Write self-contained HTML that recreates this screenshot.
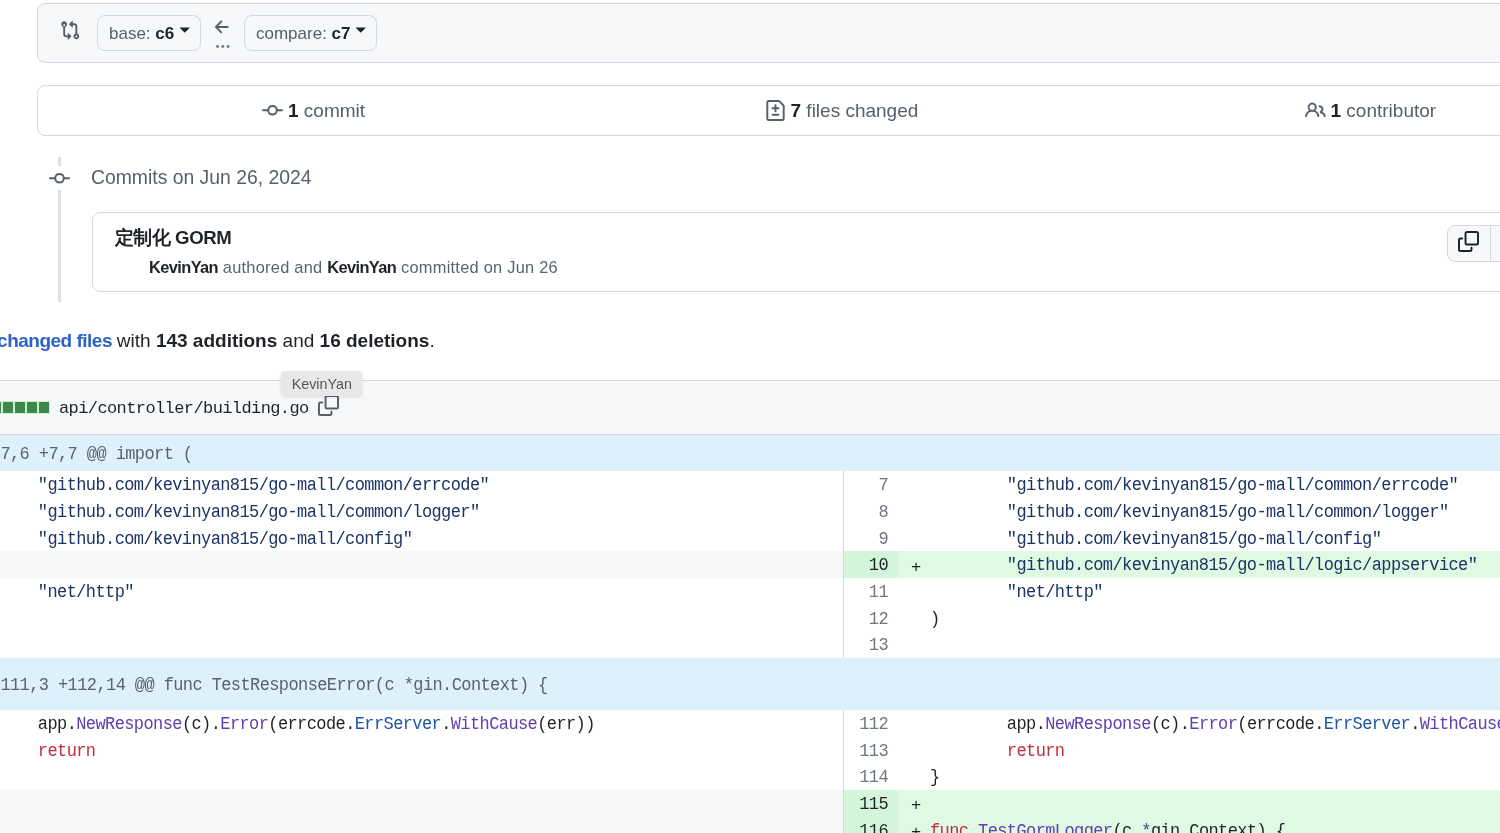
<!DOCTYPE html>
<html><head><meta charset="utf-8">
<style>
*{box-sizing:border-box;margin:0;padding:0}
html{background:#fff}
html,body{width:1500px;height:833px;overflow:hidden}
body{will-change:transform}
body{position:relative;font-family:"Liberation Sans",sans-serif;color:#1f2328}
.abs{position:absolute}
.mono{font-family:"Liberation Mono",monospace}
.box{position:absolute;border:1px solid #d5d8dc;border-radius:8px}
.btn{position:absolute;top:15px;height:36px;border:1px solid #d5d8dc;border-radius:8px;background:#f6f8fa;font-size:17px;color:#57606a;line-height:35.4px;padding-left:11px;white-space:nowrap}
.btn b{color:#1f2328}
.caret{position:absolute;top:9px}
.sumitem{position:absolute;top:0;height:49px;line-height:49px;font-size:19px;color:#57606a;white-space:nowrap}
.sumitem b{color:#1f2328}
.sumitem svg{position:absolute;top:13.7px}
.row{position:absolute;left:0;width:1500px;height:26.67px;line-height:26.67px;font-size:16px;white-space:pre}
.code{position:absolute;font-family:"Liberation Mono",monospace;font-size:17px;letter-spacing:-0.6px;white-space:pre;color:#1f2328}
.sy{transform:scaleY(1.06);transform-origin:0 17.9px}
.s{color:#1c3464}
.f{color:#6040b0}
.k{color:#bc313c}
.c{color:#1d56a6}
</style></head>
<body>

<!-- range editor -->
<div class="box" style="left:37px;top:3px;width:1500px;height:60px;background:#f6f8fa"></div>
<svg class="abs" style="left:59.9px;top:20.2px" width="20.5" height="20.5" viewBox="0 0 16 16" fill="#57606a"><path d="M9.573.677A.25.25 0 0 1 10 .854V2.5h1A2.5 2.5 0 0 1 13.5 5v5.628a2.251 2.251 0 1 1-1.5 0V5a1 1 0 0 0-1-1h-1v1.646a.25.25 0 0 1-.427.177L7.177 3.427a.25.25 0 0 1 0-.354ZM6 12v-1.646a.25.25 0 0 1 .427-.177l2.396 2.396a.25.25 0 0 1 0 .354l-2.396 2.396A.25.25 0 0 1 6 15.146V13.5H5A2.5 2.5 0 0 1 2.5 11V5.372a2.25 2.25 0 1 1 1.5 0V11a1 1 0 0 0 1 1ZM4 4a.75.75 0 1 0-1.5 0 .75.75 0 0 0 1.5 0ZM12.75 12a.75.75 0 1 0 0 1.5.75.75 0 0 0 0-1.5Z"/></svg>
<div class="btn" style="left:97px;width:104px">base: <b>c6</b><svg class="caret" style="left:76px;top:2.3px" width="21.5" height="21.5" viewBox="0 0 16 16" fill="#1f2328"><path d="m4.427 7.427 3.396 3.396a.25.25 0 0 0 .354 0l3.396-3.396A.25.25 0 0 0 11.396 7H4.604a.25.25 0 0 0-.177.427Z"/></svg></div>
<svg class="abs" style="left:212.2px;top:16.6px" width="20.5" height="20.5" viewBox="0 0 16 16" fill="#57606a"><path d="M7.78 12.53a.75.75 0 0 1-1.06 0L2.47 8.28a.75.75 0 0 1 0-1.06l4.25-4.25a.751.751 0 0 1 1.042.018.751.751 0 0 1 .018 1.042L4.81 7h7.44a.75.75 0 0 1 0 1.5H4.81l2.97 2.97a.75.75 0 0 1 0 1.06Z"/></svg>
<svg class="abs" style="left:214px;top:43px" width="16" height="7" viewBox="0 0 16 7" fill="#6e7781"><circle cx="3.5" cy="3.5" r="1.4"/><circle cx="8.8" cy="3.5" r="1.4"/><circle cx="14.1" cy="3.5" r="1.4"/></svg>
<div class="btn" style="left:244px;width:133px">compare: <b>c7</b><svg class="caret" style="left:105px;top:2.3px" width="21.5" height="21.5" viewBox="0 0 16 16" fill="#1f2328"><path d="m4.427 7.427 3.396 3.396a.25.25 0 0 0 .354 0l3.396-3.396A.25.25 0 0 0 11.396 7H4.604a.25.25 0 0 0-.177.427Z"/></svg></div>

<!-- summary -->
<div class="box" style="left:37px;top:85px;width:1500px;height:51px;background:#fff">
  <div class="sumitem" style="left:224px;padding-left:26px"><svg style="left:0" width="21" height="21" viewBox="0 0 16 16" fill="#57606a"><path d="M11.93 8.5a4.002 4.002 0 0 1-7.86 0H.75a.75.75 0 0 1 0-1.5h3.32a4.002 4.002 0 0 1 7.86 0h3.32a.75.75 0 0 1 0 1.5Zm-1.43-.75a2.5 2.5 0 1 0-5 0 2.5 2.5 0 0 0 5 0Z"/></svg><b>1</b> commit</div>
  <div class="sumitem" style="left:727px;padding-left:25.5px"><svg style="left:0" width="21" height="21" viewBox="0 0 16 16" fill="#57606a"><path d="M1 1.75C1 .784 1.784 0 2.75 0h7.586c.464 0 .909.184 1.237.513l2.914 2.914c.329.328.513.773.513 1.237v9.586A1.75 1.75 0 0 1 13.25 16H2.750A1.75 1.75 0 0 1 1 14.25Zm1.75-.25a.25.25 0 0 0-.25.25v12.5c0 .138.112.25.25.25h10.5a.25.25 0 0 0 .25-.25V4.664a.25.25 0 0 0-.073-.177l-2.914-2.914a.25.25 0 0 0-.177-.073ZM8 3.25a.75.75 0 0 1 .75.75v1.5h1.5a.75.75 0 0 1 0 1.5h-1.5v1.5a.75.75 0 0 1-1.5 0V7h-1.5a.75.75 0 0 1 0-1.5h1.5V4A.75.75 0 0 1 8 3.25Zm-3 8a.75.75 0 0 1 .75-.75h4.5a.75.75 0 0 1 0 1.5h-4.5a.75.75 0 0 1-.75-.75Z"/></svg><b>7</b> files changed</div>
  <div class="sumitem" style="left:1267px;padding-left:25.5px"><svg style="left:0" width="21" height="21" viewBox="0 0 16 16" fill="#57606a"><path d="M2 5.5a3.5 3.5 0 1 1 5.898 2.549 5.508 5.508 0 0 1 3.034 4.084.75.75 0 1 1-1.482.235 4 4 0 0 0-7.9 0 .75.75 0 0 1-1.482-.236A5.507 5.507 0 0 1 3.102 8.05 3.493 3.493 0 0 1 2 5.5ZM11 4a3.001 3.001 0 0 1 2.22 5.018 5.01 5.01 0 0 1 2.56 3.012.749.749 0 0 1-.885.954.752.752 0 0 1-.549-.514 3.507 3.507 0 0 0-2.522-2.372.75.75 0 0 1-.574-.73v-.352a.75.75 0 0 1 .416-.672A1.5 1.5 0 0 0 11 5.5.75.75 0 0 1 11 4Zm-5.5-.5a2 2 0 1 0-.001 3.999A2 2 0 0 0 5.5 3.5Z"/></svg><b>1</b> contributor</div>
</div>

<!-- timeline -->
<div class="abs" style="left:58px;top:157px;width:3px;height:9px;background:#dcdfe3"></div>
<div class="abs" style="left:58px;top:190px;width:3px;height:112px;background:#dcdfe3"></div>
<svg class="abs" style="left:49px;top:168px" width="21" height="21" viewBox="0 0 16 16" fill="#57606a"><path d="M11.93 8.5a4.002 4.002 0 0 1-7.86 0H.75a.75.75 0 0 1 0-1.5h3.32a4.002 4.002 0 0 1 7.86 0h3.32a.75.75 0 0 1 0 1.5Zm-1.43-.75a2.5 2.5 0 1 0-5 0 2.5 2.5 0 0 0 5 0Z"/></svg>
<div class="abs" style="left:91px;top:165px;font-size:19.35px;line-height:24px;color:#57606a;white-space:nowrap">Commits on Jun 26, 2024</div>

<!-- commit box -->
<div class="box" style="left:92px;top:212px;width:1500px;height:80px;background:#fff"></div>
<div class="abs" style="left:114.5px;top:225.8px;font-size:18.6px;letter-spacing:-0.4px;line-height:24px;font-weight:bold;white-space:nowrap">定制化 GORM</div>
<div class="abs" style="left:149px;top:257px;font-size:16.4px;line-height:20px;color:#59636e;letter-spacing:0.25px;white-space:nowrap"><b style="color:#1f2328;letter-spacing:-0.6px">KevinYan</b> authored and <b style="color:#1f2328;letter-spacing:-0.6px">KevinYan</b> committed on Jun 26</div>
<div class="abs" style="left:1447px;top:225px;width:100px;height:37px;border:1px solid #d5d8dc;border-radius:8px;background:#f6f8fa"></div>
<div class="abs" style="left:1490px;top:226px;width:1px;height:35px;background:#d5d8dc"></div>
<svg class="abs" style="left:1458px;top:231px" width="21" height="21" viewBox="0 0 16 16" fill="#1f2328"><path d="M0 6.75C0 5.784.784 5 1.75 5h1.5a.75.75 0 0 1 0 1.5h-1.5a.25.25 0 0 0-.25.25v7.5c0 .138.112.25.25.25h7.5a.25.25 0 0 0 .25-.25v-1.5a.75.75 0 0 1 1.5 0v1.5A1.75 1.75 0 0 1 9.25 16h-7.5A1.75 1.75 0 0 1 0 14.25Z"/><path d="M5 1.75C5 .784 5.784 0 6.75 0h7.5C15.216 0 16 .784 16 1.75v7.5A1.75 1.75 0 0 1 14.25 11h-7.5A1.75 1.75 0 0 1 5 9.25Zm1.75-.25a.25.25 0 0 0-.25.25v7.5c0 .138.112.25.25.25h7.5a.25.25 0 0 0 .25-.25v-7.5a.25.25 0 0 0-.25-.25Z"/></svg>

<!-- toc -->
<div class="abs" style="right:1388px;top:328px;font-size:19px;line-height:26px;letter-spacing:-0.5px;white-space:nowrap"><b style="color:#2c64c5">Showing 7 changed files</b></div>
<div class="abs" style="left:116.8px;top:328px;font-size:19px;line-height:26px;color:#1f2328;white-space:nowrap">with <b>143 additions</b> and <b>16 deletions</b>.</div>

<!-- file header -->
<div class="abs" style="left:-10px;top:380px;width:1520px;height:55px;background:#f6f8fa;border-top:1px solid #d5d8dc;border-bottom:1px solid #d5d8dc"></div>

<div class="abs" style="left:0;top:435px;width:1500px;height:36px;background:#dff0fd"></div>
<div class="code" style="left:-38px;top:435.8px;line-height:37px;color:#59636e;transform:scaleY(1.1);transform-origin:0 23px">@@ -7,6 +7,7 @@ import (</div>
<div class="abs" style="left:0;top:471.00px;width:843px;height:27.07px;background:#fff"></div>
<div class="abs" style="left:844px;top:471.00px;width:656px;height:27.07px;background:#fff"></div>
<div class="code sy" style="left:-39px;top:473.40px;line-height:26.67px;tab-size:8">	<span class="s">"github.com/kevinyan815/go-mall/common/errcode"</span></div>
<div class="code sy" style="left:840px;width:48px;text-align:right;top:473.40px;line-height:26.67px;color:#6e7781">7</div>
<div class="code sy" style="left:930px;top:473.40px;line-height:26.67px;tab-size:8">	<span class="s">"github.com/kevinyan815/go-mall/common/errcode"</span></div>
<div class="abs" style="left:0;top:497.67px;width:843px;height:27.07px;background:#fff"></div>
<div class="abs" style="left:844px;top:497.67px;width:656px;height:27.07px;background:#fff"></div>
<div class="code sy" style="left:-39px;top:500.07px;line-height:26.67px;tab-size:8">	<span class="s">"github.com/kevinyan815/go-mall/common/logger"</span></div>
<div class="code sy" style="left:840px;width:48px;text-align:right;top:500.07px;line-height:26.67px;color:#6e7781">8</div>
<div class="code sy" style="left:930px;top:500.07px;line-height:26.67px;tab-size:8">	<span class="s">"github.com/kevinyan815/go-mall/common/logger"</span></div>
<div class="abs" style="left:0;top:524.33px;width:843px;height:27.07px;background:#fff"></div>
<div class="abs" style="left:844px;top:524.33px;width:656px;height:27.07px;background:#fff"></div>
<div class="code sy" style="left:-39px;top:526.73px;line-height:26.67px;tab-size:8">	<span class="s">"github.com/kevinyan815/go-mall/config"</span></div>
<div class="code sy" style="left:840px;width:48px;text-align:right;top:526.73px;line-height:26.67px;color:#6e7781">9</div>
<div class="code sy" style="left:930px;top:526.73px;line-height:26.67px;tab-size:8">	<span class="s">"github.com/kevinyan815/go-mall/config"</span></div>
<div class="abs" style="left:0;top:551.00px;width:843px;height:27.07px;background:#f6f8fa"></div>
<div class="abs" style="left:844px;top:551.00px;width:656px;height:27.07px;background:#dff9e3"></div>
<div class="abs" style="left:844px;top:551.00px;width:54px;height:27.07px;background:#d3f5d9"></div>
<div class="code sy" style="left:840px;width:48px;text-align:right;top:553.40px;line-height:26.67px;color:#1f2328">10</div>
<div class="code" style="left:911px;top:554.70px;line-height:26.67px">+</div>
<div class="code sy" style="left:930px;top:553.40px;line-height:26.67px;tab-size:8">	<span class="s">"github.com/kevinyan815/go-mall/logic/appservice"</span></div>
<div class="abs" style="left:0;top:577.67px;width:843px;height:27.07px;background:#fff"></div>
<div class="abs" style="left:844px;top:577.67px;width:656px;height:27.07px;background:#fff"></div>
<div class="code sy" style="left:-39px;top:580.07px;line-height:26.67px;tab-size:8">	<span class="s">"net/http"</span></div>
<div class="code sy" style="left:840px;width:48px;text-align:right;top:580.07px;line-height:26.67px;color:#6e7781">11</div>
<div class="code sy" style="left:930px;top:580.07px;line-height:26.67px;tab-size:8">	<span class="s">"net/http"</span></div>
<div class="abs" style="left:0;top:604.34px;width:843px;height:27.07px;background:#fff"></div>
<div class="abs" style="left:844px;top:604.34px;width:656px;height:27.07px;background:#fff"></div>
<div class="code sy" style="left:840px;width:48px;text-align:right;top:606.74px;line-height:26.67px;color:#6e7781">12</div>
<div class="code sy" style="left:930px;top:606.74px;line-height:26.67px;tab-size:8">)</div>
<div class="abs" style="left:0;top:631.00px;width:843px;height:27.07px;background:#fff"></div>
<div class="abs" style="left:844px;top:631.00px;width:656px;height:27.07px;background:#fff"></div>
<div class="code sy" style="left:840px;width:48px;text-align:right;top:633.40px;line-height:26.67px;color:#6e7781">13</div>
<div class="abs" style="left:0;top:657.67px;width:1500px;height:52px;background:#dff0fd"></div>
<div class="code" style="left:-38px;top:659.97px;line-height:52px;color:#59636e;transform:scaleY(1.08);transform-origin:0 30.5px">@@ -111,3 +112,14 @@ func TestResponseError(c *gin.Context) {</div>
<div class="abs" style="left:0;top:709.67px;width:843px;height:27.07px;background:#fff"></div>
<div class="abs" style="left:844px;top:709.67px;width:656px;height:27.07px;background:#fff"></div>
<div class="code sy" style="left:-39px;top:712.07px;line-height:26.67px;tab-size:8">	app.<span class="f">NewResponse</span>(c).<span class="f">Error</span>(errcode.<span class="c">ErrServer</span>.<span class="f">WithCause</span>(err))</div>
<div class="code sy" style="left:840px;width:48px;text-align:right;top:712.07px;line-height:26.67px;color:#6e7781">112</div>
<div class="code sy" style="left:930px;top:712.07px;line-height:26.67px;tab-size:8">	app.<span class="f">NewResponse</span>(c).<span class="f">Error</span>(errcode.<span class="c">ErrServer</span>.<span class="f">WithCause</span>(err))</div>
<div class="abs" style="left:0;top:736.34px;width:843px;height:27.07px;background:#fff"></div>
<div class="abs" style="left:844px;top:736.34px;width:656px;height:27.07px;background:#fff"></div>
<div class="code sy" style="left:-39px;top:738.74px;line-height:26.67px;tab-size:8">	<span class="k">return</span></div>
<div class="code sy" style="left:840px;width:48px;text-align:right;top:738.74px;line-height:26.67px;color:#6e7781">113</div>
<div class="code sy" style="left:930px;top:738.74px;line-height:26.67px;tab-size:8">	<span class="k">return</span></div>
<div class="abs" style="left:0;top:763.00px;width:843px;height:27.07px;background:#fff"></div>
<div class="abs" style="left:844px;top:763.00px;width:656px;height:27.07px;background:#fff"></div>
<div class="code sy" style="left:840px;width:48px;text-align:right;top:765.40px;line-height:26.67px;color:#6e7781">114</div>
<div class="code sy" style="left:930px;top:765.40px;line-height:26.67px;tab-size:8">}</div>
<div class="abs" style="left:0;top:789.67px;width:843px;height:27.07px;background:#f6f8fa"></div>
<div class="abs" style="left:844px;top:789.67px;width:656px;height:27.07px;background:#dff9e3"></div>
<div class="abs" style="left:844px;top:789.67px;width:54px;height:27.07px;background:#d3f5d9"></div>
<div class="code sy" style="left:840px;width:48px;text-align:right;top:792.07px;line-height:26.67px;color:#1f2328">115</div>
<div class="code" style="left:911px;top:793.37px;line-height:26.67px">+</div>
<div class="abs" style="left:0;top:816.34px;width:843px;height:27.07px;background:#f6f8fa"></div>
<div class="abs" style="left:844px;top:816.34px;width:656px;height:27.07px;background:#dff9e3"></div>
<div class="abs" style="left:844px;top:816.34px;width:54px;height:27.07px;background:#d3f5d9"></div>
<div class="code sy" style="left:840px;width:48px;text-align:right;top:818.74px;line-height:26.67px;color:#1f2328">116</div>
<div class="code" style="left:911px;top:820.04px;line-height:26.67px">+</div>
<div class="code sy" style="left:930px;top:818.74px;line-height:26.67px;tab-size:8"><span class="k">func</span> <span class="f">TestGormLogger</span>(c <span class="c">*</span>gin.Context) {</div>
<div class="abs" style="left:843px;top:471px;width:1px;height:187px;background:#d5d8dc"></div>
<div class="abs" style="left:843px;top:709.67px;width:1px;height:200px;background:#d5d8dc"></div>
<div class="abs" style="left:0;top:401px;width:50px;height:12.5px;background:#c9f3d0"></div>
<div class="abs" style="left:-8.8px;top:402px;width:9.7px;height:10.5px;border-radius:0.5px;background:#3f8749"></div>
<div class="abs" style="left:3.2px;top:402px;width:9.7px;height:10.5px;border-radius:0.5px;background:#3f8749"></div>
<div class="abs" style="left:15.2px;top:402px;width:9.7px;height:10.5px;border-radius:0.5px;background:#3f8749"></div>
<div class="abs" style="left:27.2px;top:402px;width:9.7px;height:10.5px;border-radius:0.5px;background:#3f8749"></div>
<div class="abs" style="left:39.2px;top:402px;width:9.7px;height:10.5px;border-radius:0.5px;background:#3f8749"></div>
<div class="code" style="left:59px;top:395.5px;line-height:26px">api/controller/building.go</div>
<svg class="abs" style="left:318px;top:395.3px" width="21" height="21" viewBox="0 0 16 16" fill="#57606a"><path d="M0 6.75C0 5.784.784 5 1.75 5h1.5a.75.75 0 0 1 0 1.5h-1.5a.25.25 0 0 0-.25.25v7.5c0 .138.112.25.25.25h7.5a.25.25 0 0 0 .25-.25v-1.5a.75.75 0 0 1 1.5 0v1.5A1.75 1.75 0 0 1 9.25 16h-7.5A1.75 1.75 0 0 1 0 14.25Z"/><path d="M5 1.75C5 .784 5.784 0 6.75 0h7.5C15.216 0 16 .784 16 1.75v7.5A1.75 1.75 0 0 1 14.25 11h-7.5A1.75 1.75 0 0 1 5 9.25Zm1.75-.25a.25.25 0 0 0-.25.25v7.5c0 .138.112.25.25.25h7.5a.25.25 0 0 0 .25-.25v-7.5a.25.25 0 0 0-.25-.25Z"/></svg>
<div class="abs" style="left:281.3px;top:371.2px;width:81px;height:24.8px;background:#e8e8e8;border-radius:4px;box-shadow:0 1px 3px rgba(0,0,0,.12);font-size:14.3px;line-height:27.2px;color:#555;text-align:center">KevinYan</div>
</body></html>
